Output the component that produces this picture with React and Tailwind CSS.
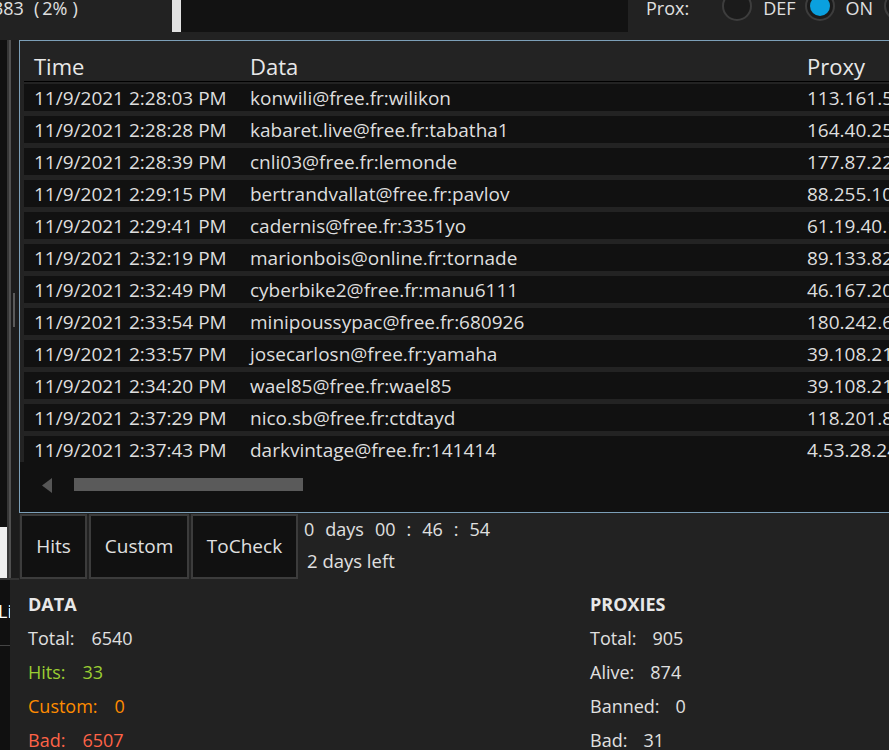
import React from 'react'

const rows = [
  ['11/9/2021 2:28:03 PM', 'konwili@free.fr:wilikon', '113.161.59.14:8080'],
  ['11/9/2021 2:28:28 PM', 'kabaret.live@free.fr:tabatha1', '164.40.25.21:3128'],
  ['11/9/2021 2:28:39 PM', 'cnli03@free.fr:lemonde', '177.87.223.9:8080'],
  ['11/9/2021 2:29:15 PM', 'bertrandvallat@free.fr:pavlov', '88.255.102.1:3128'],
  ['11/9/2021 2:29:41 PM', 'cadernis@free.fr:3351yo', '61.19.40.170:8080'],
  ['11/9/2021 2:32:19 PM', 'marionbois@online.fr:tornade', '89.133.82.5:3128'],
  ['11/9/2021 2:32:49 PM', 'cyberbike2@free.fr:manu6111', '46.167.209.3:8080'],
  ['11/9/2021 2:33:54 PM', 'minipoussypac@free.fr:680926', '180.242.68.4:3128'],
  ['11/9/2021 2:33:57 PM', 'josecarlosn@free.fr:yamaha', '39.108.216.7:8080'],
  ['11/9/2021 2:34:20 PM', 'wael85@free.fr:wael85', '39.108.216.7:8080'],
  ['11/9/2021 2:37:29 PM', 'nico.sb@free.fr:ctdtayd', '118.201.83.2:3128'],
  ['11/9/2021 2:37:43 PM', 'darkvintage@free.fr:141414', '4.53.28.241:8080'],
]

const dataStats = [
  ['Total:', '6540', 'text-[#e0e0e0]'],
  ['Hits:', '33', 'text-[#9acd32]'],
  ['Custom:', '0', 'text-[#ff8c00]'],
  ['Bad:', '6507', 'text-[#ff6347]'],
]

const proxyStats = [
  ['Total:', '905'],
  ['Alive:', '874'],
  ['Banned:', '0'],
  ['Bad:', '31'],
]

function Radio({ checked }) {
  return (
    <div className="mt-[-9px] flex h-[30px] w-[30px] shrink-0 items-center justify-center rounded-full border-2 border-[#3d3d3d] bg-[#1b1b1b]">
      {checked ? <div className="h-[20px] w-[20px] rounded-full bg-[#0aa0df]" /> : null}
    </div>
  )
}

function TopBar() {
  return (
    <div className="flex h-[40px] items-start text-[18px] leading-[18px]">
      <div className="flex w-[172px] shrink-0 mt-[-1px]">
        <span className="-ml-[7px]">383</span>
        <span className="ml-[10px]">(</span>
        <span className="ml-[3px]">2</span>
        <span>%</span>
        <span className="ml-[5px]">)</span>
      </div>
      <div className="h-[32px] w-[9px] shrink-0 bg-[#e2e2e2]" />
      <div className="h-[32px] w-[447px] shrink-0 bg-[#121212]" />
      <span className="ml-[18px] mt-[-1px] shrink-0">Prox:</span>
      <div className="ml-[33px]">
        <Radio />
      </div>
      <span className="ml-[11px] mt-[-1px] shrink-0">DEF</span>
      <div className="ml-[9px]">
        <Radio checked />
      </div>
      <span className="ml-[11px] mt-[-1px] shrink-0">ON</span>
      <div className="ml-[11px]">
        <Radio />
      </div>
    </div>
  )
}

function LeftStrip() {
  return (
    <div className="flex h-[540px] w-[19px] shrink-0 border-b-2 border-[#333]">
      <div className="relative w-[7px] bg-[#101010]">
        <div className="absolute left-0 top-[487px] h-[51px] w-[7px] bg-[#efefef]" />
      </div>
      <div className="w-[2px] bg-[#363636]" />
      <div className="w-[2px] bg-[#505050]" />
      <div className="relative w-[7px] bg-[#1c1c1c]">
        <div className="absolute left-[2px] top-[253px] h-[34px] w-[2px] bg-[#5a5a5a]" />
      </div>
      <div className="w-[1px] bg-[#1c1c1c]" />
    </div>
  )
}

function Grid() {
  return (
    <div className="flex h-[473px] w-[1000px] flex-col border border-[#7c9fb8] bg-[#232323]">
      <div className="ml-[4px] flex h-[41px] shrink-0 border-b border-black pt-[14px] text-[22px] leading-none text-[#e8e8e8]">
        <div className="w-[216px] pl-[10px]">Time</div>
        <div className="w-[557px] pl-[10px]">Data</div>
        <div className="pl-[10px]">Proxy</div>
      </div>
      <div className="h-[380px] shrink-0 overflow-hidden pl-[4px] pt-[2px]">
        {rows.map(([time, data, proxy]) => (
          <div
            key={time}
            className="mb-[5px] flex h-[27px] whitespace-nowrap bg-[#111] pt-[2px] text-[19px] leading-[25px] text-[#dedede]"
          >
            <div className="w-[216px] shrink-0 pl-[10px]">{time}</div>
            <div className="w-[557px] shrink-0 pl-[10px]">{data}</div>
            <div className="pl-[10px]">{proxy}</div>
          </div>
        ))}
      </div>
      <div className="flex h-[50px] shrink-0 items-start bg-[#111] pl-[22px] pt-[16px]">
        <svg width="10" height="15" viewBox="0 0 10 15">
          <path d="M10 0 L0 7.5 L10 15 Z" fill="#565656" />
        </svg>
        <div className="ml-[22px] h-[13px] w-[229px] bg-[#5a5a5a]" />
      </div>
    </div>
  )
}

function Buttons() {
  return (
    <div className="flex h-[67px] items-start">
      <div className="ml-[1px] mt-[1px] flex gap-[2px] text-[19px]">
        {[
          ['Hits', 'w-[67px]'],
          ['Custom', 'w-[100px]'],
          ['ToCheck', 'w-[107px]'],
        ].map(([label, w]) => (
          <div
            key={label}
            className={`${w} flex h-[65px] items-center justify-center border-2 border-[#3c3c3c] bg-[#111] text-[#e0e0e0]`}
          >
            {label}
          </div>
        ))}
      </div>
      <div className="ml-[6px] text-[18px] leading-[32px] text-[#e0e0e0]">
        <div className="flex gap-[11px]">
          <span>0</span>
          <span>days</span>
          <span>00</span>
          <span>:</span>
          <span>46</span>
          <span>:</span>
          <span>54</span>
        </div>
        <div className="ml-[3px] text-[18.5px]">2 days left</div>
      </div>
    </div>
  )
}

function Stats() {
  return (
    <div className="flex h-[170px]">
      <div className="w-[10px] shrink-0 overflow-hidden bg-[#101010]">
        <div className="flex h-[66px] items-start border-b border-[#444]">
          <span className="-ml-[2px] mt-[22px] whitespace-nowrap text-[18px] leading-[18px] text-white">List</span>
        </div>
      </div>
      <div className="flex flex-1 bg-[#222] pl-[18px] pt-[7px] text-[18px] leading-[34px]">
        <div className="w-[562px] shrink-0">
          <div className="font-bold text-[#e8e8e8]">DATA</div>
          {dataStats.map(([label, value, color]) => (
            <div key={label} className={color}>
              {label}
              <span className="ml-[17px]">{value}</span>
            </div>
          ))}
        </div>
        <div className="text-[#e0e0e0]">
          <div className="font-bold text-[#e8e8e8]">PROXIES</div>
          {proxyStats.map(([label, value]) => (
            <div key={label}>
              {label}
              <span className="ml-[16px]">{value}</span>
            </div>
          ))}
        </div>
      </div>
    </div>
  )
}

export default function App() {
  return (
    <div className="h-[750px] w-[889px] overflow-hidden bg-[#222] font-['Open_Sans','Noto_Sans',sans-serif] text-[#e0e0e0]">
      <TopBar />
      <div className="flex h-[540px]">
        <LeftStrip />
        <div className="min-w-0 flex-1 overflow-hidden">
          <Grid />
          <Buttons />
        </div>
      </div>
      <Stats />
    </div>
  )
}
